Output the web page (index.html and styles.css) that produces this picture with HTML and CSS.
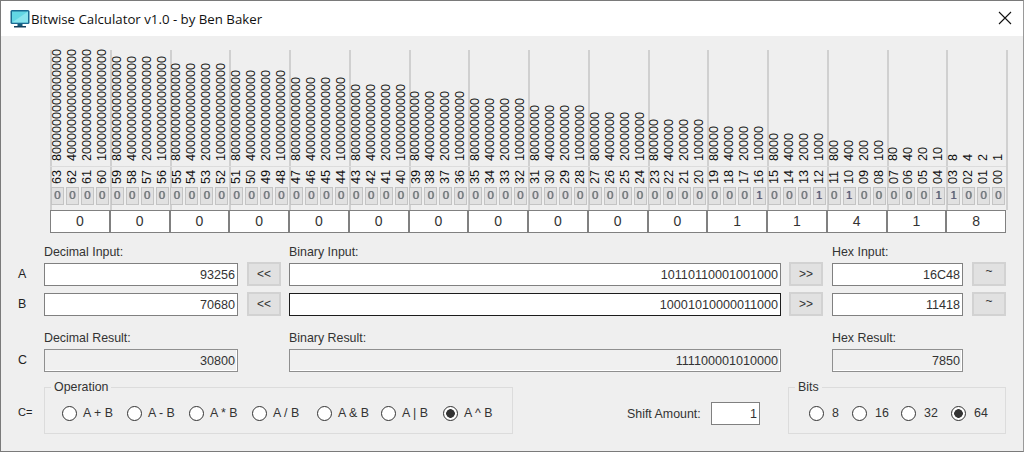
FILE: index.html
```html
<!DOCTYPE html>
<html lang="en">
<head>
  <meta charset="UTF-8">
  <title>Bitwise Calculator v1.0 - by Ben Baker</title>
  <link rel="stylesheet" href="styles.css">
</head>
<body>
  <div class="window">
    <div class="titlebar">
      <svg class="app-icon" width="20" height="20" viewBox="0 0 20 20">
        <rect x="0.5" y="1" width="19" height="14" rx="1.5" fill="#1a6a92"/>
        <rect x="2" y="2.5" width="16" height="11" fill="#62d6e4"/>
        <path d="M2 13.5 L18 2.5 V13.5 Z" fill="#8ae4ee"/>
        <rect x="7.5" y="15" width="5" height="2" fill="#155a7c"/>
        <rect x="4" y="17" width="12" height="1.5" fill="#123f5c"/>
      </svg>
      <span class="title">Bitwise Calculator v1.0 - by Ben Baker</span>
      <svg class="close" width="14" height="14" viewBox="0 0 14 14">
        <path d="M1 1 L13 13 M13 1 L1 13" stroke="#111" stroke-width="1.1" fill="none"/>
      </svg>
    </div>

    <div class="bits">
      <div class="group">
        <div class="bit"><span class="weight">8000000000000000</span><span class="idx">63</span><span class="val">0</span></div>
        <div class="bit"><span class="weight">4000000000000000</span><span class="idx">62</span><span class="val">0</span></div>
        <div class="bit"><span class="weight">2000000000000000</span><span class="idx">61</span><span class="val">0</span></div>
        <div class="bit"><span class="weight">1000000000000000</span><span class="idx">60</span><span class="val">0</span></div>
      </div>
      <div class="group">
        <div class="bit"><span class="weight">800000000000000</span><span class="idx">59</span><span class="val">0</span></div>
        <div class="bit"><span class="weight">400000000000000</span><span class="idx">58</span><span class="val">0</span></div>
        <div class="bit"><span class="weight">200000000000000</span><span class="idx">57</span><span class="val">0</span></div>
        <div class="bit"><span class="weight">100000000000000</span><span class="idx">56</span><span class="val">0</span></div>
      </div>
      <div class="group">
        <div class="bit"><span class="weight">80000000000000</span><span class="idx">55</span><span class="val">0</span></div>
        <div class="bit"><span class="weight">40000000000000</span><span class="idx">54</span><span class="val">0</span></div>
        <div class="bit"><span class="weight">20000000000000</span><span class="idx">53</span><span class="val">0</span></div>
        <div class="bit"><span class="weight">10000000000000</span><span class="idx">52</span><span class="val">0</span></div>
      </div>
      <div class="group">
        <div class="bit"><span class="weight">8000000000000</span><span class="idx">51</span><span class="val">0</span></div>
        <div class="bit"><span class="weight">4000000000000</span><span class="idx">50</span><span class="val">0</span></div>
        <div class="bit"><span class="weight">2000000000000</span><span class="idx">49</span><span class="val">0</span></div>
        <div class="bit"><span class="weight">1000000000000</span><span class="idx">48</span><span class="val">0</span></div>
      </div>
      <div class="group">
        <div class="bit"><span class="weight">800000000000</span><span class="idx">47</span><span class="val">0</span></div>
        <div class="bit"><span class="weight">400000000000</span><span class="idx">46</span><span class="val">0</span></div>
        <div class="bit"><span class="weight">200000000000</span><span class="idx">45</span><span class="val">0</span></div>
        <div class="bit"><span class="weight">100000000000</span><span class="idx">44</span><span class="val">0</span></div>
      </div>
      <div class="group">
        <div class="bit"><span class="weight">80000000000</span><span class="idx">43</span><span class="val">0</span></div>
        <div class="bit"><span class="weight">40000000000</span><span class="idx">42</span><span class="val">0</span></div>
        <div class="bit"><span class="weight">20000000000</span><span class="idx">41</span><span class="val">0</span></div>
        <div class="bit"><span class="weight">10000000000</span><span class="idx">40</span><span class="val">0</span></div>
      </div>
      <div class="group">
        <div class="bit"><span class="weight">8000000000</span><span class="idx">39</span><span class="val">0</span></div>
        <div class="bit"><span class="weight">4000000000</span><span class="idx">38</span><span class="val">0</span></div>
        <div class="bit"><span class="weight">2000000000</span><span class="idx">37</span><span class="val">0</span></div>
        <div class="bit"><span class="weight">1000000000</span><span class="idx">36</span><span class="val">0</span></div>
      </div>
      <div class="group">
        <div class="bit"><span class="weight">800000000</span><span class="idx">35</span><span class="val">0</span></div>
        <div class="bit"><span class="weight">400000000</span><span class="idx">34</span><span class="val">0</span></div>
        <div class="bit"><span class="weight">200000000</span><span class="idx">33</span><span class="val">0</span></div>
        <div class="bit"><span class="weight">100000000</span><span class="idx">32</span><span class="val">0</span></div>
      </div>
      <div class="group">
        <div class="bit"><span class="weight">80000000</span><span class="idx">31</span><span class="val">0</span></div>
        <div class="bit"><span class="weight">40000000</span><span class="idx">30</span><span class="val">0</span></div>
        <div class="bit"><span class="weight">20000000</span><span class="idx">29</span><span class="val">0</span></div>
        <div class="bit"><span class="weight">10000000</span><span class="idx">28</span><span class="val">0</span></div>
      </div>
      <div class="group">
        <div class="bit"><span class="weight">8000000</span><span class="idx">27</span><span class="val">0</span></div>
        <div class="bit"><span class="weight">4000000</span><span class="idx">26</span><span class="val">0</span></div>
        <div class="bit"><span class="weight">2000000</span><span class="idx">25</span><span class="val">0</span></div>
        <div class="bit"><span class="weight">1000000</span><span class="idx">24</span><span class="val">0</span></div>
      </div>
      <div class="group">
        <div class="bit"><span class="weight">800000</span><span class="idx">23</span><span class="val">0</span></div>
        <div class="bit"><span class="weight">400000</span><span class="idx">22</span><span class="val">0</span></div>
        <div class="bit"><span class="weight">200000</span><span class="idx">21</span><span class="val">0</span></div>
        <div class="bit"><span class="weight">100000</span><span class="idx">20</span><span class="val">0</span></div>
      </div>
      <div class="group">
        <div class="bit"><span class="weight">80000</span><span class="idx">19</span><span class="val">0</span></div>
        <div class="bit"><span class="weight">40000</span><span class="idx">18</span><span class="val">0</span></div>
        <div class="bit"><span class="weight">20000</span><span class="idx">17</span><span class="val">0</span></div>
        <div class="bit"><span class="weight">10000</span><span class="idx">16</span><span class="val on">1</span></div>
      </div>
      <div class="group">
        <div class="bit"><span class="weight">8000</span><span class="idx">15</span><span class="val">0</span></div>
        <div class="bit"><span class="weight">4000</span><span class="idx">14</span><span class="val">0</span></div>
        <div class="bit"><span class="weight">2000</span><span class="idx">13</span><span class="val">0</span></div>
        <div class="bit"><span class="weight">1000</span><span class="idx">12</span><span class="val on">1</span></div>
      </div>
      <div class="group">
        <div class="bit"><span class="weight">800</span><span class="idx">11</span><span class="val">0</span></div>
        <div class="bit"><span class="weight">400</span><span class="idx">10</span><span class="val on">1</span></div>
        <div class="bit"><span class="weight">200</span><span class="idx">09</span><span class="val">0</span></div>
        <div class="bit"><span class="weight">100</span><span class="idx">08</span><span class="val">0</span></div>
      </div>
      <div class="group">
        <div class="bit"><span class="weight">80</span><span class="idx">07</span><span class="val">0</span></div>
        <div class="bit"><span class="weight">40</span><span class="idx">06</span><span class="val">0</span></div>
        <div class="bit"><span class="weight">20</span><span class="idx">05</span><span class="val">0</span></div>
        <div class="bit"><span class="weight">10</span><span class="idx">04</span><span class="val on">1</span></div>
      </div>
      <div class="group">
        <div class="bit"><span class="weight">8</span><span class="idx">03</span><span class="val on">1</span></div>
        <div class="bit"><span class="weight">4</span><span class="idx">02</span><span class="val">0</span></div>
        <div class="bit"><span class="weight">2</span><span class="idx">01</span><span class="val">0</span></div>
        <div class="bit"><span class="weight">1</span><span class="idx">00</span><span class="val">0</span></div>
      </div>
    </div>

    <div class="nibbles">
      <div class="nibble">0</div><div class="nibble">0</div><div class="nibble">0</div><div class="nibble">0</div>
      <div class="nibble">0</div><div class="nibble">0</div><div class="nibble">0</div><div class="nibble">0</div>
      <div class="nibble">0</div><div class="nibble">0</div><div class="nibble">0</div><div class="nibble">1</div>
      <div class="nibble">1</div><div class="nibble">4</div><div class="nibble">1</div><div class="nibble">8</div>
    </div>

    <div class="form">
      <span></span><label class="cap">Decimal Input:</label><span></span><label class="cap">Binary Input:</label><span></span><label class="cap">Hex Input:</label><span></span>

      <span class="letter">A</span>
      <div class="field">93256</div>
      <button class="btn">&lt;&lt;</button>
      <div class="field">10110110001001000</div>
      <button class="btn btn-right">&gt;&gt;</button>
      <div class="field">16C48</div>
      <button class="btn tilde">~</button>

      <span class="letter">B</span>
      <div class="field">70680</div>
      <button class="btn">&lt;&lt;</button>
      <div class="field focus">10001010000011000</div>
      <button class="btn btn-right">&gt;&gt;</button>
      <div class="field">11418</div>
      <button class="btn tilde">~</button>

      <span></span><label class="cap">Decimal Result:</label><span></span><label class="cap">Binary Result:</label><span></span><label class="cap">Hex Result:</label><span></span>

      <span class="letter">C</span>
      <div class="field readonly">30800</div>
      <span></span>
      <div class="field readonly">111100001010000</div>
      <span></span>
      <div class="field readonly">7850</div>
      <span></span>
    </div>

    <div class="bottom">
      <span class="letter">C=</span>
      <fieldset class="box op-box">
        <legend>Operation</legend>
        <label class="radio"><input type="radio" name="op">A + B</label>
        <label class="radio"><input type="radio" name="op">A - B</label>
        <label class="radio"><input type="radio" name="op">A * B</label>
        <label class="radio"><input type="radio" name="op">A / B</label>
        <label class="radio"><input type="radio" name="op">A &amp; B</label>
        <label class="radio"><input type="radio" name="op">A | B</label>
        <label class="radio"><input type="radio" name="op" checked>A ^ B</label>
      </fieldset>
      <div class="shift">
        <span>Shift Amount:</span>
        <div class="field shift-field">1</div>
      </div>
      <fieldset class="box bits-box">
        <legend>Bits</legend>
        <label class="radio"><input type="radio" name="bits">8</label>
        <label class="radio"><input type="radio" name="bits">16</label>
        <label class="radio"><input type="radio" name="bits">32</label>
        <label class="radio"><input type="radio" name="bits" checked>64</label>
      </fieldset>
    </div>
  </div>
</body>
</html>
```
FILE: styles.css
```css
* {
  box-sizing: border-box;
}

html, body {
  margin: 0;
  padding: 0;
  height: 452px;
  overflow: hidden;
}

body {
  font-family: "Liberation Sans", Arial, sans-serif;
  font-size: 12.4px;
  color: #222;
}

.window {
  height: 452px;
  background-color: #efefef;
  border: 1px solid #7a7a7a;
  border-right-color: #9a9a9a;
}

.titlebar {
  display: flex;
  align-items: center;
  height: 35px;
  background-color: #fff;
  padding-left: 9px;
}

.app-icon {
  margin-right: 1px;
}

.title {
  font-family: "Open Sans", sans-serif;
  font-size: 13.25px;
  color: #111;
}

.close {
  margin-left: auto;
  margin-right: 11px;
  margin-bottom: 2px;
}

/* bit table */
.bits {
  display: grid;
  grid-template-columns: repeat(16, 1fr);
  width: 956px;
  height: 160px;
  margin: 14px 0 0 49px;
  box-shadow: 2px 0 0 #d0d0d0;
}

.group {
  display: flex;
  box-shadow: inset 2px 0 0 #d0d0d0;
}

.bit {
  flex: 1;
  display: flex;
  flex-direction: column;
  align-items: center;
  font-size: 12.6px;
  line-height: 13px;
}

.weight {
  height: 116px;
  padding-top: 5px;
  writing-mode: vertical-rl;
  transform: rotate(180deg);
  white-space: nowrap;
  color: #111;
}

.idx {
  width: 100%;
  height: 21px;
  padding-top: 3px;
  padding-right: 1px;
  border-bottom: 1px solid #dcdcdc;
  writing-mode: vertical-rl;
  transform: rotate(180deg);
  text-align: left;
  color: #111;
}

.val {
  width: 13px;
  height: 18px;
  text-align: center;
  font-size: 11.5px;
  line-height: 15px;
  color: #70757c;
  text-shadow: -0.5px 0 rgba(50, 125, 205, .6), 0.5px 0 rgba(215, 130, 45, .6);
  background-color: #e1e1e1;
  border: 1px solid #c4c4c4;
}

.val.on {
  color: #5a5a78;
}

.nibbles {
  display: grid;
  grid-template-columns: repeat(16, 1fr);
  width: 956px;
  height: 23px;
  margin-left: 49px;
}

.nibble {
  background-color: #fff;
  border: 1px solid #808080;
  text-align: center;
  font-size: 14px;
  line-height: 21px;
  color: #333;
}

/* inputs */
.form {
  display: grid;
  grid-template-columns: 43px 194px 51px 492px 51px 131px 43px;
  grid-template-rows: 18px 23px 23px 19px 23px;
  row-gap: 7px;
  margin-top: 5px;
}

.cap {
  align-self: end;
  margin-bottom: -3px;
  color: #333;
  line-height: 14px;
}

.letter {
  padding-left: 17px;
  line-height: 23px;
}

.field {
  height: 23px;
  padding-right: 2px;
  text-align: right;
  font-size: 12.6px;
  line-height: 22px;
  background-color: #fff;
  border: 1px solid #808080;
  color: #333;
}

.field.focus {
  border-color: #1c1c1c;
}

.field.readonly {
  background-color: #f0f0f0;
  border-color: #8f8f8f;
  box-shadow: inset -1px -1px 0 #fff;
}

.btn {
  width: 34px;
  height: 24px;
  margin: -1px 0 0 9px;
  padding: 0;
  font-family: "Liberation Sans", Arial, sans-serif;
  font-size: 12px;
  color: #333;
  background-color: #e1e1e1;
  border: 2px solid #d2d2d2;
}

.btn-right {
  margin-left: 8px;
}

.tilde {
  padding-bottom: 8px;
}

/* bottom row */
.bottom {
  display: flex;
  align-items: flex-start;
  margin-top: 8px;
}

.bottom .letter {
  width: 43px;
  margin-top: 21px;
  font-size: 11px;
}

.box {
  display: grid;
  margin: 0;
  padding: 9px 0 0 17px;
  height: 54px;
  border: 1px solid #dcdcdc;
}

.box legend {
  padding: 0 3px;
  margin-left: -11px;
  line-height: 14px;
  color: #333;
}

.op-box {
  grid-template-columns: 65px 62px 63px 65px 64px 62px auto;
  width: 469px;
}

.bits-box {
  grid-template-columns: 43px 49px 50px auto;
  width: 218px;
  margin-left: 28px;
  padding-left: 20px;
}

.bits-box legend {
  margin-left: -14px;
}

.bits-box .radio input {
  margin-right: 8px;
}

.radio {
  display: flex;
  align-items: center;
  height: 20px;
  color: #333;
}

.radio input {
  appearance: none;
  width: 15px;
  height: 15px;
  margin: 0 6px 0 0;
  background-color: #fff;
  border: 1px solid #333;
  border-radius: 50%;
}

.radio input:checked {
  background: radial-gradient(circle, #333 0 4px, #fff 4.6px);
}

.shift {
  display: flex;
  align-items: center;
  justify-content: space-between;
  width: 133px;
  height: 23px;
  margin: 22px 0 0 114px;
  color: #333;
  white-space: nowrap;
}

.shift-field {
  width: 49px;
}
```
